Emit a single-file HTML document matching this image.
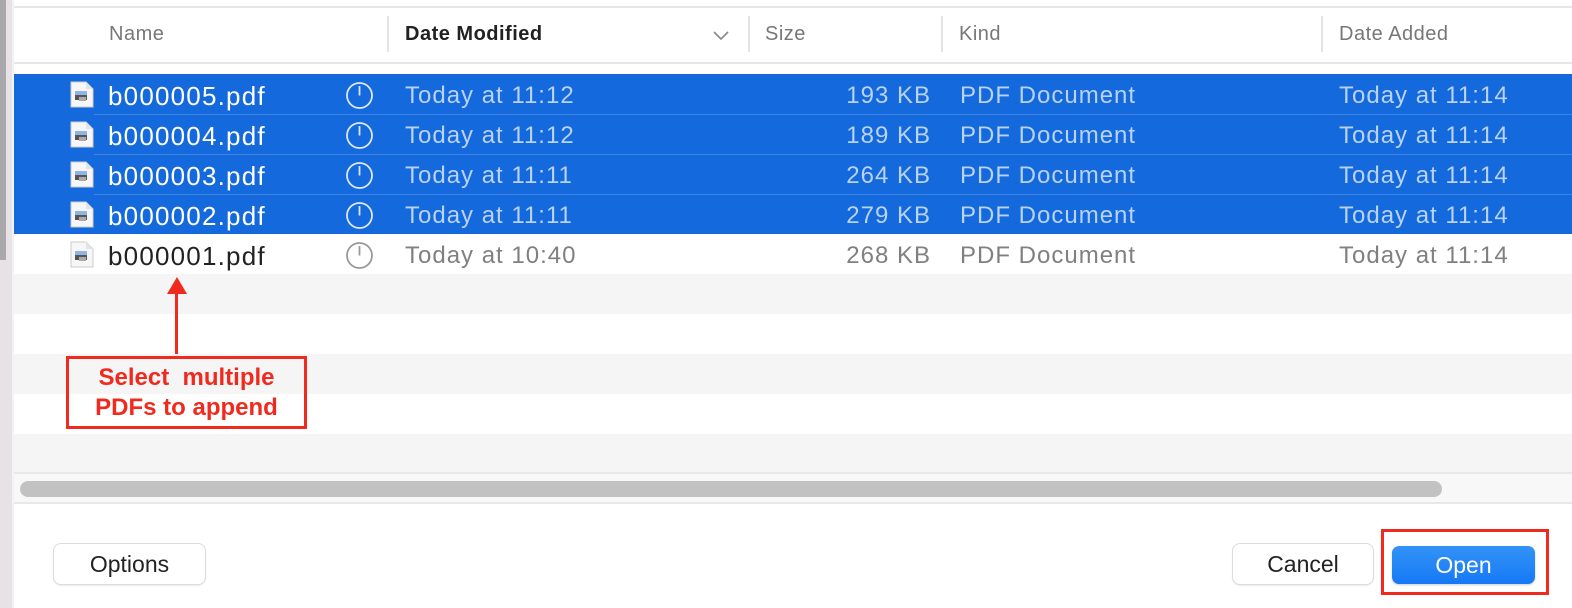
<!DOCTYPE html>
<html><head><style>
*{margin:0;padding:0;box-sizing:border-box}
body{width:1572px;height:608px;overflow:hidden;background:#fff;font-family:"Liberation Sans",sans-serif;position:relative}
.abs{position:absolute}
.row{position:absolute;left:14px;right:0;height:40px}
.t{position:absolute;top:0;line-height:40px;font-size:24px;letter-spacing:1px;white-space:nowrap;margin-top:2px}
.hdr{position:absolute;top:23px;font-size:20px;color:#777;letter-spacing:.5px}
.sep{position:absolute;top:16px;width:2px;height:36px;background:#e4e4e4}
.btn{position:absolute;border-radius:7px;background:#fff;box-shadow:0 0 0 1px #dcdcdc,0 1px 2px rgba(0,0,0,.2);font-size:23px;color:#222;text-align:center;line-height:40px}
</style></head><body>
<div class="abs" style="left:0;top:0;width:6px;height:260px;background:#a9a8aa"></div>
<div class="abs" style="left:0;top:260px;width:6px;height:348px;background:#e6e2e6"></div>
<div class="abs" style="left:6px;top:0;width:6px;height:608px;background:#e6e2e6"></div>
<div class="abs" style="left:12px;top:0;width:2px;height:608px;background:#f3f3f3"></div>
<div class="abs" style="left:14px;top:6px;right:0;height:2px;background:#e6e6e6"></div>
<div class="abs" style="left:14px;top:62px;right:0;height:2px;background:#e6e6e6"></div>
<div class="hdr" style="left:109px">Name</div>
<div class="sep" style="left:387px"></div>
<div class="hdr" style="left:405px;color:#222;font-weight:bold">Date Modified</div>
<svg class="abs" style="left:712px;top:29px" width="18" height="12"><path d="M2 3 L9 10 L16 3" stroke="#888" stroke-width="1.6" fill="none"/></svg>
<div class="sep" style="left:748px"></div>
<div class="hdr" style="left:765px">Size</div>
<div class="sep" style="left:941px"></div>
<div class="hdr" style="left:959px">Kind</div>
<div class="sep" style="left:1321px"></div>
<div class="hdr" style="left:1339px">Date Added</div>

<div class="row" style="top:74px;background:#1469dc;height:160px"></div>
<div class="abs" style="left:94px;right:0;top:114px;height:1px;background:#3f84e2"></div>
<div class="abs" style="left:94px;right:0;top:154px;height:1px;background:#3f84e2"></div>
<div class="abs" style="left:94px;right:0;top:194px;height:1px;background:#3f84e2"></div>
<div class="row" style="top:274px;background:#f4f5f4"></div>
<div class="row" style="top:354px;background:#f4f5f4"></div>
<div class="row" style="top:434px;background:#f4f5f4"></div>

<div id="rows"></div>

<div class="abs" style="left:14px;top:472px;right:0;height:32px;background:#f8f8f8;border-top:2px solid #e8e8e8;border-bottom:2px solid #e8e8e8"></div>
<div class="abs" style="left:20px;top:481px;width:1422px;height:16px;border-radius:8px;background:#c2c2c2"></div>

<div class="btn" style="left:54px;top:544px;width:151px;height:40px">Options</div>
<div class="btn" style="left:1233px;top:544px;width:140px;height:40px">Cancel</div>
<div class="btn" style="left:1392px;top:546px;width:143px;height:38px;line-height:38px;background:linear-gradient(#3393f7,#1679f5);color:#fff;box-shadow:0 1px 2px rgba(0,0,0,.2)">Open</div>
<div class="abs" style="left:1381px;top:529px;width:168px;height:66px;border:3px solid #f02a1e"></div>

<div class="abs" style="left:175px;top:290px;width:3px;height:64px;background:#f02a1e"></div>
<svg class="abs" style="left:166px;top:277px" width="22" height="18"><path d="M11 0 L21 17 L1 17Z" fill="#f02a1e"/></svg>
<div class="abs" style="left:66px;top:356px;width:241px;height:73px;border:3px solid #f02a1e;color:#f02a1e;font-weight:bold;font-size:24px;text-align:center;line-height:30px;padding-top:4px">Select&nbsp; multiple<br>PDFs to append</div>

<script>
var d=[["b000005.pdf","11:12","193",1],["b000004.pdf","11:12","189",1],["b000003.pdf","11:11","264",1],["b000002.pdf","11:11","279",1],["b000001.pdf","10:40","268",0]];
var h="";
d.forEach(function(r,i){var y=74+i*40;var s=r[3];var nc=s?"#fff":"#222",dc=s?"#b9d2f5":"#808080",ic=s?"#dce8fa":"#999";
h+='<div class="abs" style="left:70px;top:'+(y+7)+'px;width:24px;height:27px"><svg width="24" height="27"><path d="M1 1 H16 L23 8 V26 H1Z" fill="#f6f6f6" stroke="#ccc" stroke-width="1"/><path d="M16 1 V8 H23" fill="#e4e4e4"/><rect x="5" y="10" width="12" height="4" fill="#8fb4e6"/><rect x="5" y="14" width="12" height="5" fill="#555"/><rect x="9" y="16" width="7" height="4" fill="#aaa"/></svg></div>';
h+='<div class="t" style="left:108px;top:'+y+'px;color:'+nc+';font-size:26px;letter-spacing:1.2px">'+r[0]+'</div>';
h+='<svg class="abs" style="left:345px;top:'+(y+7)+'px" width="29" height="29"><circle cx="14.5" cy="14.5" r="12.5" fill="none" stroke="'+ic+'" stroke-width="1.8"/><path d="M14.5 14.5 V5" stroke="'+ic+'" stroke-width="1.8"/></svg>';
h+='<div class="t" style="left:405px;top:'+y+'px;color:'+dc+'">Today at '+r[1]+'</div>';
h+='<div class="t" style="right:641px;top:'+y+'px;color:'+dc+'">'+r[2]+' KB</div>';
h+='<div class="t" style="left:960px;top:'+y+'px;color:'+dc+'">PDF Document</div>';
h+='<div class="t" style="left:1339px;top:'+y+'px;color:'+dc+'">Today at 11:14</div>';
});
document.getElementById("rows").innerHTML=h;
</script>
</body></html>
